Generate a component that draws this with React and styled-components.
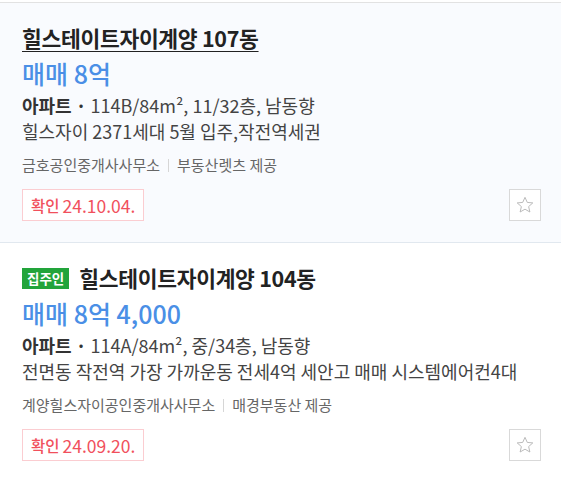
import styled, { createGlobalStyle } from "styled-components";

const GlobalStyle = createGlobalStyle`
  body {
    margin: 0;
    background: #fff;
    font-family: "Noto Sans CJK KR", "Noto Sans", sans-serif;
  }
`;

const List = styled.div`
  margin-top: 2px;
  border-top: 1px solid #e2e2e2;
`;

const Card = styled.div`
  display: flex;
  flex-direction: column;
  padding: 21px 20px 21px 22px;
  background: ${(props) => (props.active ? "#f9fbfe" : "#fff")};
  border-bottom: 1px solid #e1e8ef;
`;

const TitleRow = styled.div`
  display: flex;
  align-items: center;
  gap: 10px;
  height: 28px;
`;

const Badge = styled.span`
  display: inline-flex;
  align-items: center;
  height: 21px;
  padding: 0 5px;
  background: #22a43b;
  color: #fff;
  font-size: 13.5px;
  font-weight: 700;
`;

const Title = styled.div`
  font-size: 21.5px;
  font-weight: 700;
  color: #222;
  line-height: 28px;
  letter-spacing: -0.3px;
  text-decoration: ${(props) => (props.underline ? "underline" : "none")};
  text-underline-offset: 4px;
  text-decoration-thickness: 1px;
`;

const Price = styled.div`
  margin-top: 7px;
  font-size: 25px;
  font-weight: 500;
  color: #4a8fe6;
  line-height: 28px;
`;

const Info = styled.div`
  margin-top: ${(props) => props.gap || 0}px;
  font-size: 18px;
  color: #444;
  line-height: 26px;
  white-space: nowrap;
`;

const Kind = styled.b`
  color: #333;
  font-weight: 700;
`;

const Agency = styled.div`
  display: flex;
  align-items: center;
  gap: 8px;
  margin-top: 11px;
  font-size: 15px;
  color: #666;
  line-height: 20px;
`;

const Pipe = styled.span`
  width: 1px;
  height: 13px;
  background: #d6d6d6;
`;

const Bottom = styled.div`
  display: flex;
  align-items: center;
  justify-content: space-between;
  margin-top: 14px;
`;

const Tag = styled.div`
  display: flex;
  align-items: center;
  gap: 3px;
  height: 32px;
  box-sizing: border-box;
  padding: 0 8px;
  border: 1px solid #fbcdd1;
  background: #fff;
  color: #f1505c;
  font-size: 17.5px;
`;

const TagLabel = styled.span`
  font-size: 15.5px;
  font-weight: 500;
`;

const StarButton = styled.button`
  display: flex;
  align-items: center;
  justify-content: center;
  width: 32px;
  height: 32px;
  padding: 0;
  border: 1px solid #d9d9d9;
  background: #fff;
  cursor: pointer;
`;

function Star() {
  return (
    <svg width="20" height="20" viewBox="0 0 24 24" fill="none">
      <path
        d="M12 2.8l2.75 6.1 6.6.6-5 4.4 1.5 6.5L12 17l-5.85 3.4 1.5-6.5-5-4.4 6.6-.6z"
        stroke="#b5b5b5"
        strokeWidth="1.1"
        strokeLinejoin="round"
      />
    </svg>
  );
}

const listings = [
  {
    id: 1,
    title: "힐스테이트자이계양 107동",
    price: "매매 8억",
    spec: "114B/84m², 11/32층, 남동향",
    desc: "힐스자이 2371세대 5월 입주,작전역세권",
    agency: "금호공인중개사사무소",
    provider: "부동산렛츠 제공",
    date: "24.10.04.",
    active: true,
  },
  {
    id: 2,
    owner: true,
    title: "힐스테이트자이계양 104동",
    price: "매매 8억 4,000",
    spec: "114A/84m², 중/34층, 남동향",
    desc: "전면동 작전역 가장 가까운동 전세4억 세안고 매매 시스템에어컨4대",
    agency: "계양힐스자이공인중개사사무소",
    provider: "매경부동산 제공",
    date: "24.09.20.",
  },
];

export default function App() {
  return (
    <>
      <GlobalStyle />
      <List>
        {listings.map((item) => (
          <Card key={item.id} active={item.active}>
            <TitleRow>
              {item.owner && <Badge>집주인</Badge>}
              <Title underline={item.active}>{item.title}</Title>
            </TitleRow>
            <Price>{item.price}</Price>
            <Info gap={5}>
              <Kind>아파트 ·</Kind> {item.spec}
            </Info>
            <Info>{item.desc}</Info>
            <Agency>
              <span>{item.agency}</span>
              <Pipe />
              <span>{item.provider}</span>
            </Agency>
            <Bottom>
              <Tag>
                <TagLabel>확인</TagLabel>
                <span>{item.date}</span>
              </Tag>
              <StarButton aria-label="관심">
                <Star />
              </StarButton>
            </Bottom>
          </Card>
        ))}
      </List>
    </>
  );
}
